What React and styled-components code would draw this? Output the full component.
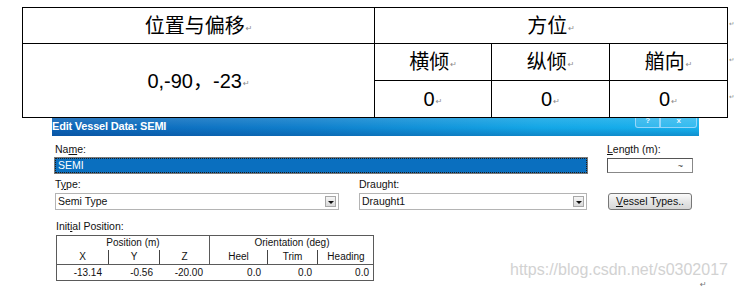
import React from "react";
import styled, { createGlobalStyle } from "styled-components";

const Global = createGlobalStyle`
  html, body { margin: 0; padding: 0; background: #fff; }
  #root { width: 735px; height: 290px; overflow: hidden; }
`;

const Page = styled.div`
  position: relative;
  width: 735px;
  height: 290px;
  background: #fff;
  overflow: hidden;
`;

const TopArea = styled.div`
  display: flex;
  padding: 7px 0 0 22px;
`;

const WordTable = styled.div`
  display: grid;
  grid-template-columns: 352px 117px 118px 118px;
  grid-template-rows: 36px 37px 37px;
  border-left: 1px solid #000;
  border-top: 1px solid #000;
  font-family: "Liberation Sans", "Noto Sans CJK SC", sans-serif;
  font-size: 20px;
  color: #000;
`;

const Cell = styled.div`
  box-sizing: border-box;
  border-right: 1px solid #000;
  border-bottom: 1px solid #000;
  display: flex;
  align-items: center;
  justify-content: center;
  grid-column: ${(p) => p.$col || "auto"};
  grid-row: ${(p) => p.$row || "auto"};
  line-height: 1;
`;

const Mark = styled.span`
  font-family: "DejaVu Sans", sans-serif;
  font-size: ${(p) => p.$size || 8}px;
  line-height: 1;
  color: #8a8a8a;
  margin-left: 1px;
  position: relative;
  top: ${(p) => p.$dy ?? 3}px;
`;

const MarksCol = styled.div`
  display: grid;
  grid-template-rows: 36px 37px 37px;
  padding-top: 1px;
`;

const MarkSlot = styled.div`
  display: flex;
  align-items: center;
`;

const Dialog = styled.div`
  margin-left: 52px;
  width: 647px;
  font-family: "Liberation Sans", Tahoma, sans-serif;
  font-size: 10.5px;
  color: #111;
`;

const TitleBar = styled.div`
  position: relative;
  height: 18px;
  background:
    linear-gradient(180deg, rgba(255,255,255,0.12) 0%, rgba(255,255,255,0) 55%, rgba(0,40,110,0.25) 100%),
    linear-gradient(90deg, #0c63b6 0%, #0f7fcc 40%, #13a6e6 75%, #16b2ee 100%);
  color: #fff;
  font-weight: bold;
  font-size: 11px;
  line-height: 17px;
  white-space: nowrap;
  letter-spacing: -0.2px;
`;

const TitleButtons = styled.div`
  position: absolute;
  top: 0;
  right: 2px;
  display: flex;
  height: 10px;
`;

const TitleBtn = styled.div`
  width: ${(p) => p.$w}px;
  height: 10px;
  box-sizing: border-box;
  border: 1px solid rgba(190, 225, 255, 0.7);
  border-top: none;
  border-radius: ${(p) => p.$r};
  background: rgba(255, 255, 255, 0.12);
  color: #e8f4ff;
  font-size: 8px;
  line-height: 6px;
  text-align: center;
`;

const Form = styled.div`
  display: grid;
  grid-template-columns: 284px 20px 228px 20px 86px;
  padding: 7px 0 0 3px;
`;

const Label = styled.div`
  grid-column: ${(p) => p.$col};
  line-height: 13px;
  height: 13px;
  margin-top: ${(p) => p.$mt || 0}px;
  margin-bottom: 2px;
  white-space: nowrap;
`;

const U = styled.span`
  text-decoration: underline;
`;

const NameInput = styled.div`
  grid-column: 1 / 4;
  box-sizing: border-box;
  height: 15px;
  background: #0a6fbf;
  border: 1px dotted #1b1b1b;
  box-shadow: 0 0 0 1px #7a7a7a;
  color: #fff;
  line-height: 13px;
  padding-left: 2px;
`;

const LengthInput = styled.div`
  grid-column: 5;
  box-sizing: border-box;
  height: 15px;
  background: #fff;
  border: 1px solid #555;
  border-right-color: #888;
  border-bottom-color: #888;
  display: flex;
  justify-content: flex-end;
  align-items: center;
  padding-right: 9px;
  font-size: 9px;
  color: #333;
`;

const Select = styled.div`
  grid-column: ${(p) => p.$col};
  box-sizing: border-box;
  height: 17px;
  border: 1px solid #b4b4b4;
  background: #fff;
  line-height: 15px;
  padding-left: 2px;
  display: flex;
  justify-content: space-between;
  align-items: center;
`;

const Arrow = styled.div`
  width: 11px;
  height: 11px;
  margin-right: 2px;
  box-sizing: border-box;
  border: 1px solid #a8a8a8;
  background: linear-gradient(#f6f6f6, #d9d9d9);
  display: flex;
  align-items: center;
  justify-content: center;
  &::after {
    content: "";
    border-left: 3px solid transparent;
    border-right: 3px solid transparent;
    border-top: 3px solid #111;
    margin-top: 1px;
  }
`;

const Button = styled.div`
  grid-column: 5;
  margin-left: 1px;
  width: 84px;
  box-sizing: border-box;
  height: 17px;
  border: 1px solid #777;
  border-radius: 3px;
  background: linear-gradient(#fafafa, #e6e6e6 50%, #d6d6d6);
  display: flex;
  align-items: center;
  justify-content: center;
  line-height: 1;
`;

const PosLabel = styled.div`
  line-height: 13px;
  margin: 10px 0 2px 4px;
`;

const PosTable = styled.div`
  margin-left: 4px;
  width: 318px;
  box-sizing: border-box;
  border: 1px solid #5a5a5a;
  font-size: 10px;
`;

const HeadRow = styled.div`
  display: grid;
  grid-template-columns: 152px 165px;
  border-bottom: 1px solid #5a5a5a;
`;

const Group = styled.div`
  border-left: ${(p) => (p.$divider ? "1px solid #5a5a5a" : "none")};
`;

const GroupTitle = styled.div`
  height: 14px;
  line-height: 14px;
  text-align: center;
`;

const SubRow = styled.div`
  display: grid;
  grid-template-columns: ${(p) => p.$cols};
  height: 14px;
`;

const SubHead = styled.div`
  text-align: center;
  line-height: 14px;
  border-left: ${(p) => (p.$first ? "none" : "1px solid #444")};
`;

const DataRow = styled.div`
  display: grid;
  grid-template-columns: 51px 51px 51px 58px 50px 57px;
  height: 15px;
`;

const DataCell = styled.div`
  text-align: right;
  line-height: 15px;
  padding-right: ${(p) => p.$pr}px;
`;

const Watermark = styled.div`
  position: absolute;
  left: 510px;
  top: 261px;
  font-family: "Liberation Sans", sans-serif;
  font-size: 16px;
  line-height: 18px;
  color: #d2d2d2;
  white-space: nowrap;
`;

const EndMark = styled.span`
  position: absolute;
  left: 700px;
  top: 280px;
  font-family: "DejaVu Sans", sans-serif;
  font-size: 8px;
  line-height: 9px;
  color: #777;
`;

const pm = "\u21B5";

export default function App() {
  return (
    <Page>
      <Global />
      <TopArea>
        <WordTable>
          <Cell $col="1" $row="1">位置与偏移<Mark>{pm}</Mark></Cell>
          <Cell $col="1" $row="2 / 4">0,-90，-23<Mark>{pm}</Mark></Cell>
          <Cell $col="2 / 5" $row="1">方位<Mark>{pm}</Mark></Cell>
          <Cell $col="2" $row="2">横倾<Mark>{pm}</Mark></Cell>
          <Cell $col="3" $row="2">纵倾<Mark>{pm}</Mark></Cell>
          <Cell $col="4" $row="2">艏向<Mark>{pm}</Mark></Cell>
          <Cell $col="2" $row="3">0<Mark>{pm}</Mark></Cell>
          <Cell $col="3" $row="3">0<Mark>{pm}</Mark></Cell>
          <Cell $col="4" $row="3">0<Mark>{pm}</Mark></Cell>
        </WordTable>
        <MarksCol>
          <MarkSlot><Mark $dy={-2} $size={6.5}>{pm}</Mark></MarkSlot>
          <MarkSlot><Mark $dy={-2} $size={6.5}>{pm}</Mark></MarkSlot>
          <MarkSlot><Mark $dy={-2} $size={6.5}>{pm}</Mark></MarkSlot>
        </MarksCol>
      </TopArea>
      <Dialog>
        <TitleBar>
          Edit Vessel Data: SEMI
          <TitleButtons>
            <TitleBtn $w={25} $r="0 0 0 3px">?</TitleBtn>
            <TitleBtn $w={37} $r="0 0 3px 0">x</TitleBtn>
          </TitleButtons>
        </TitleBar>
        <Form>
          <Label $col="1 / 4">Na<U>m</U>e:</Label>
          <Label $col="5"><U>L</U>ength (m):</Label>
          <NameInput>SEMI</NameInput>
          <LengthInput>~</LengthInput>
          <Label $col="1" $mt={5}>T<U>y</U>pe:</Label>
          <Label $col="3" $mt={5}>Draught:</Label>
          <Select $col="1">Semi Type<Arrow /></Select>
          <Select $col="3">Draught1<Arrow /></Select>
          <Button><U>V</U>essel Types..</Button>
        </Form>
        <PosLabel>Init<U>i</U>al Position:</PosLabel>
        <PosTable>
          <HeadRow>
            <Group>
              <GroupTitle>Position (m)</GroupTitle>
              <SubRow $cols="51px 51px 50px">
                <SubHead $first>X</SubHead>
                <SubHead>Y</SubHead>
                <SubHead>Z</SubHead>
              </SubRow>
            </Group>
            <Group $divider>
              <GroupTitle>Orientation (deg)</GroupTitle>
              <SubRow $cols="57px 50px 57px">
                <SubHead $first>Heel</SubHead>
                <SubHead>Trim</SubHead>
                <SubHead>Heading</SubHead>
              </SubRow>
            </Group>
          </HeadRow>
          <DataRow>
            <DataCell $pr={6}>-13.14</DataCell>
            <DataCell $pr={6}>-0.56</DataCell>
            <DataCell $pr={7}>-20.00</DataCell>
            <DataCell $pr={7}>0.0</DataCell>
            <DataCell $pr={6}>0.0</DataCell>
            <DataCell $pr={6}>0.0</DataCell>
          </DataRow>
        </PosTable>
      </Dialog>
      <Watermark>https://blog.csdn.net/s0302017</Watermark>
      <EndMark>{pm}</EndMark>
    </Page>
  );
}
